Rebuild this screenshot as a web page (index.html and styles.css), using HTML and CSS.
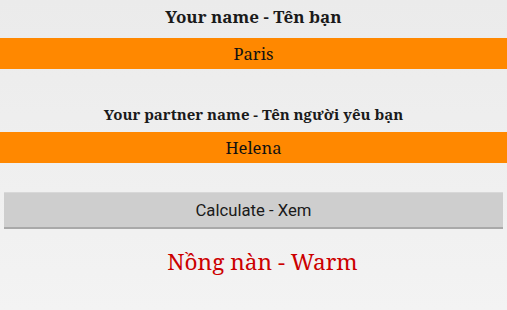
FILE: index.html
```html
<!DOCTYPE html>
<html lang="en">
<head>
  <meta charset="UTF-8">
  <title>Love Calculator</title>
  <link rel="stylesheet" href="styles.css">
</head>
<body>
  <div class="screen">
    <div class="field-label first">Your name - Tên bạn</div>
    <input class="name-input" type="text" value="Paris">

    <div class="field-label second">Your partner name - Tên người yêu bạn</div>
    <input class="name-input" type="text" value="Helena">

    <div class="action">
      <button class="calc-button">Calculate - Xem</button>
    </div>

    <div class="result">Nồng nàn - Warm</div>
  </div>
</body>
</html>
```

FILE: styles.css
```css
html, body {
  margin: 0;
  padding: 0;
  width: 100%;
  height: 100%;
  overflow: hidden;
}

body {
  font-family: "Noto Serif", "Droid Serif", "DejaVu Serif", "Liberation Serif", serif;
  background: linear-gradient(to bottom, #ebebeb, #f3f3f3);
  color: #111;
}

.screen {
  display: flex;
  flex-direction: column;
  height: 310px;
}

.field-label {
  font-weight: bold;
  text-align: center;
  color: #1a1a1a;
  box-sizing: border-box;
  line-height: 20px;
}

.field-label.first {
  font-size: 17px;
  height: 38px;
  padding-top: 7px;
}

.field-label.second {
  font-size: 15px;
  margin-top: 32px;
  height: 31px;
  padding-top: 3px;
}

.name-input {
  display: block;
  width: 100%;
  height: 31px;
  box-sizing: border-box;
  margin: 0;
  border: none;
  outline: none;
  background-color: #ff8800;
  color: #111;
  font-family: inherit;
  font-size: 16.6px;
  text-align: center;
  padding: 0;
}

.action {
  padding: 29px 4px 0;
}

.calc-button {
  display: block;
  width: 100%;
  height: 37px;
  margin: 0;
  border: none;
  border-top: 1px solid #d8d8d8;
  border-bottom: 2px solid #a9a9a9;
  background-color: #cecece;
  color: #1a1a1a;
  font-family: Roboto, "Noto Sans", sans-serif;
  font-size: 16.7px;
  cursor: pointer;
}

.result {
  margin-top: 18px;
  padding-left: 18px;
  text-align: center;
  color: #cc0000;
  font-size: 22.6px;
  line-height: 30px;
}
```
